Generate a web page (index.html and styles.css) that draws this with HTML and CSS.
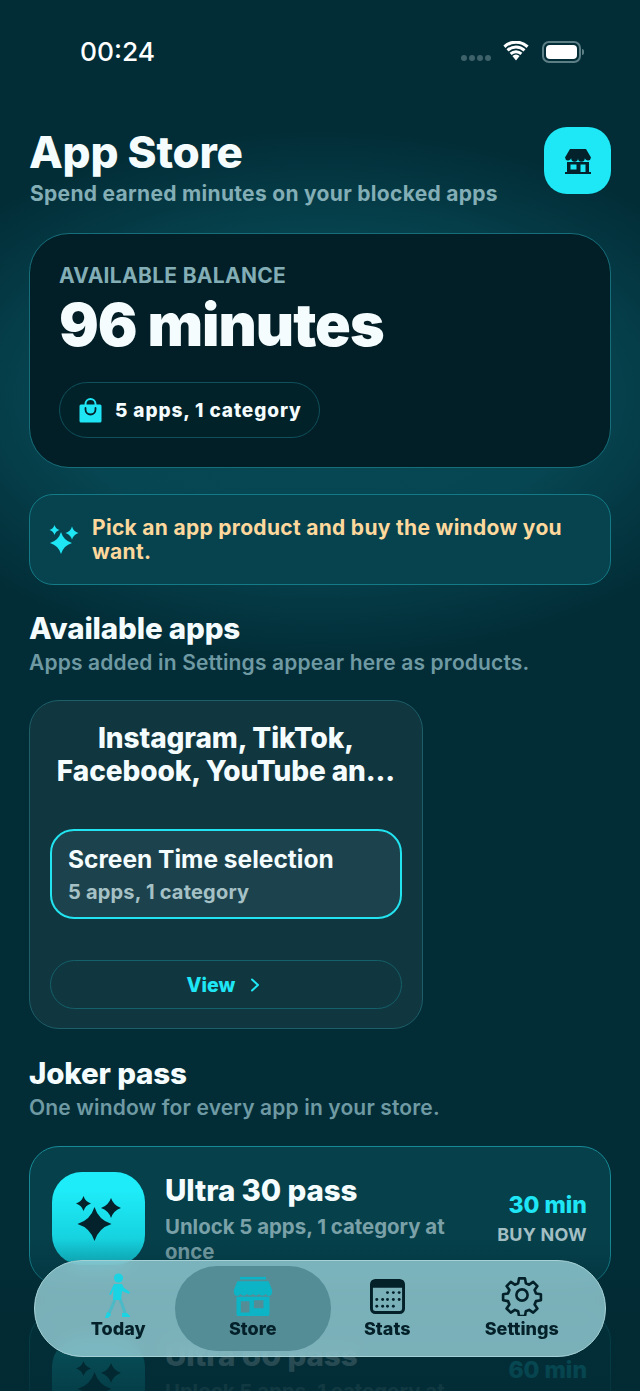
FILE: index.html
```html
<!DOCTYPE html>
<html lang="en">
<head>
<meta charset="utf-8">
<title>App Store</title>
<link rel="stylesheet" href="styles.css">
</head>
<body>
<div class="screen">
  <div class="glow"></div>
  <header class="status">
    <span class="time">00:24</span>
    <div class="status-icons">
      <div class="dots"><i></i><i></i><i></i><i></i></div>
      <svg class="wifi" width="26" height="20" viewBox="0 0 26 20"><path fill="#fff" d="M13 15l3.600 0-3.600 4.400L9.400 15a5 5 0 0 1 7.200 0zM6.600 11.800a9.200 9.200 0 0 1 12.800 0l-2 2.300a6.300 6.300 0 0 0-8.800 0zM3.500 8.200a13.800 13.800 0 0 1 19 0l-2 2.300a10.800 10.800 0 0 0-15 0zM.4 4.600a18.400 18.400 0 0 1 25.200 0l-2 2.300a15.400 15.400 0 0 0-21.200 0z"/></svg>
      <div class="battery"><div class="battery-fill"></div></div>
      <div class="battery-tip"></div>
    </div>
  </header>

  <main class="content">
    <section class="page-head">
      <div>
        <h1 class="page-title">App Store</h1>
        <p class="page-sub">Spend earned minutes on your blocked apps</p>
      </div>
      <div class="head-btn">
        <svg width="28" height="26" viewBox="0 0 28 26"><path fill="#03222b" d="M6 1h16l5 8.500a3.200 3.200 0 0 1-6.200.8 3.400 3.400 0 0 1-6.800 0 3.400 3.400 0 0 1-6.800 0A3.200 3.200 0 0 1 1 9.500z"/><path fill="#03222b" fill-rule="evenodd" d="M3 14h22v10h2v2H1v-2h2zM6.500 16.500v5h6v-5zM16.500 16.500V24h5v-7.500z"/></svg>
      </div>
    </section>

    <section class="balance">
      <div class="balance-label">AVAILABLE BALANCE</div>
      <div class="balance-value">96 minutes</div>
      <div class="pill">
        <svg width="23" height="25" viewBox="0 0 23 25"><path fill="none" stroke="#1fe6f5" stroke-width="2" d="M6.500 8V6a5 5 0 0 1 10 0v2"/><path fill="#1fe6f5" d="M2 6.500h19a1.500 1.500 0 0 1 1.500 1.500v15a1.500 1.500 0 0 1-1.500 1.500H2A1.500 1.500 0 0 1 .5 23V8A1.500 1.500 0 0 1 2 6.500z"/><path fill="none" stroke="#03222b" stroke-width="1.800" stroke-linecap="round" d="M6.500 10v1.500a5 5 0 0 0 10 0V10"/></svg>
        <span>5 apps, 1 category</span>
      </div>
    </section>

    <section class="tip">
      <svg width="30" height="30" viewBox="0 0 30 30"><path fill="#1fe6f5" d="M12 7Q14.500 15.500 23 18 14.500 20.500 12 29 9.500 20.500 1 18 9.500 15.500 12 7zM5.500 0Q6.700 3.800 10.500 5 6.700 6.200 5.500 10 4.300 6.200.5 5 4.300 3.800 5.500 0zM23 1.500Q24.500 6.500 29.500 8 24.500 9.500 23 14.500 21.500 9.500 16.500 8 21.500 6.500 23 1.500z"/></svg>
      <p>Pick an app product and buy the window you want.</p>
    </section>

    <h2 class="section-title first">Available apps</h2>
    <p class="section-sub">Apps added in Settings appear here as products.</p>

    <section class="app-card">
      <h3 class="app-title">Instagram, TikTok,<br>Facebook, YouTube an...</h3>
      <div class="selection">
        <div class="selection-title">Screen Time selection</div>
        <div class="selection-sub">5 apps, 1 category</div>
      </div>
      <div class="view-btn">
        <span>View</span>
        <svg width="10" height="14" viewBox="0 0 10 14"><path fill="none" stroke="#1fe6f5" stroke-width="2" stroke-linecap="round" stroke-linejoin="round" d="M2 1.500 8 7l-6 5.500"/></svg>
      </div>
    </section>

    <h2 class="section-title">Joker pass</h2>
    <p class="section-sub">One window for every app in your store.</p>

    <section class="pass">
      <div class="pass-icon">
        <svg width="46" height="46" viewBox="0 0 46 46"><path fill="#03222b" d="M18.500 11Q22.500 24 35.500 28 22.500 32 18.500 45 14.500 32 1.500 28 14.500 24 18.500 11zM7.500 0Q9.300 5.700 15 7.500 9.300 9.300 7.500 15 5.700 9.300 0 7.500 5.700 5.700 7.500 0zM35 2Q37.500 9.500 45 12 37.500 14.500 35 22 32.500 14.500 25 12 32.500 9.500 35 2z"/></svg>
      </div>
      <div class="pass-body">
        <div class="pass-title">Ultra 30 pass</div>
        <div class="pass-sub">Unlock 5 apps, 1 category at once</div>
      </div>
      <div class="pass-side">
        <div class="pass-price">30 min</div>
        <div class="pass-buy">BUY NOW</div>
      </div>
    </section>

    <section class="pass">
      <div class="pass-icon">
        <svg width="46" height="46" viewBox="0 0 46 46"><path fill="#03222b" d="M18.500 11Q22.500 24 35.500 28 22.500 32 18.500 45 14.500 32 1.500 28 14.500 24 18.500 11zM7.500 0Q9.300 5.700 15 7.500 9.300 9.300 7.500 15 5.700 9.300 0 7.500 5.700 5.700 7.500 0zM35 2Q37.500 9.500 45 12 37.500 14.500 35 22 32.500 14.500 25 12 32.500 9.500 35 2z"/></svg>
      </div>
      <div class="pass-body">
        <div class="pass-title">Ultra 60 pass</div>
        <div class="pass-sub">Unlock 5 apps, 1 category at once</div>
      </div>
      <div class="pass-side">
        <div class="pass-price">60 min</div>
        <div class="pass-buy">BUY NOW</div>
      </div>
    </section>
  </main>

  <div class="fade"></div>

  <nav class="tabbar">
    <div class="tab">
      <svg class="tab-icon" width="27" height="45" viewBox="0 0 27 45"><g fill="none" stroke="#1cc4d3" stroke-width="3" stroke-linecap="round" stroke-linejoin="round" opacity=".5"><path d="M10 26l-3 8-3 6M15 26l3 8 2 6"/></g><g fill="#1ad4e4"><circle cx="13.500" cy="5" r="4.500"/><path d="M9 11h8l2 4 6 4-1 2-7-3-1 9H8l.5-11-2.500 6-2-.5z"/><path d="M2 39l3 1 1 2-3 3H0zM17 40h5l3 3v1h-8z"/></g></svg>
      <span>Today</span>
    </div>
    <div class="tab active">
      <svg class="tab-icon raise-2" width="40" height="40" viewBox="0 0 46 46"><g fill="#0cb4c6"><path d="M8 1h30v3H8z"/><path d="M5 6h36l4 10v3a4 4 0 0 1-7.500 1.800 4.500 4.500 0 0 1-7.500 0 4.500 4.500 0 0 1-7 0 4.500 4.500 0 0 1-7 0 4.500 4.500 0 0 1-7.500 0A4 4 0 0 1 1 19v-3z"/><path fill-rule="evenodd" d="M4 24h38v20a2 2 0 0 1-2 2H6a2 2 0 0 1-2-2zM9 29v13h10V29zM24 28v9h11v-9z"/></g></svg>
      <span>Store</span>
    </div>
    <div class="tab">
      <svg class="tab-icon raise-4" width="37" height="35" viewBox="0 0 36 36"><rect x="1.500" y="1.500" width="33" height="33" rx="4" fill="none" stroke="#04212a" stroke-width="3"/><path fill="#04212a" d="M4 1h28a3 3 0 0 1 3 3v5H1V4a3 3 0 0 1 3-3z"/><g fill="#04212a"><circle cx="18" cy="14" r="1.500"/><circle cx="24" cy="14" r="1.500"/><circle cx="30" cy="14" r="1.500"/><circle cx="7" cy="21" r="1.500"/><circle cx="13" cy="21" r="1.500"/><circle cx="18" cy="21" r="1.500"/><circle cx="24" cy="21" r="1.500"/><circle cx="30" cy="21" r="1.500"/><circle cx="7" cy="28" r="1.500"/><circle cx="13" cy="28" r="1.500"/><circle cx="18" cy="28" r="1.500"/><circle cx="24" cy="28" r="1.500"/></g></svg>
      <span>Stats</span>
    </div>
    <div class="tab">
      <svg class="tab-icon raise-2" width="42" height="42" viewBox="0 0 24 24"><circle cx="12" cy="12" r="3.200" fill="none" stroke="#04212a" stroke-width="1.500"/><path fill="none" stroke="#04212a" stroke-width="1.500" stroke-linejoin="round" d="M10.300 2.500h3.400l.5 2.800 1.900.8 2.300-1.600 2.400 2.400-1.600 2.300.8 1.900 2.800.5v3.400l-2.800.5-.8 1.900 1.600 2.300-2.400 2.400-2.300-1.600-1.900.8-.5 2.800h-3.400l-.5-2.800-1.900-.8-2.300 1.600-2.400-2.400 1.600-2.300-.8-1.900-2.800-.5v-3.400l2.800-.5.8-1.900-1.600-2.300 2.400-2.400 2.300 1.600 1.900-.8z"/></svg>
      <span>Settings</span>
    </div>
  </nav>
</div>
</body>
</html>
```
FILE: styles.css
```css
* { box-sizing: border-box; margin: 0; padding: 0; }
html, body { height: 100%; }
body {
  background: #022e38;
  font-family: Inter, "Noto Sans", "Liberation Sans", sans-serif;
  color: #f4fcfe;
  overflow: hidden;
}
.screen {
  position: relative;
  width: 640px;
  height: 1391px;
  overflow: hidden;
  background: #022d37;
}
.glow {
  position: absolute;
  left: -140px;
  top: 130px;
  width: 920px;
  height: 530px;
  background: radial-gradient(closest-side, #064854 0%, #064652 55%, rgba(5, 62, 73, .7) 78%, rgba(2, 45, 55, 0) 100%);
}
.status {
  position: relative;
  height: 104px;
  display: flex;
  justify-content: space-between;
  align-items: center;
  padding: 0 56px 0 80px;
}
.time { font-size: 26.300px; font-weight: 500; color: #fff; margin-top: -2px; }
.status-icons { display: flex; align-items: center; }
.dots { display: flex; gap: 2px; margin: 12px 12px 0 0; }
.dots i { width: 6px; height: 6px; border-radius: 50%; background: #3e6269; }
.wifi { margin-right: 13px; margin-top: -2px; }
.battery {
  width: 39px;
  height: 22px;
  border: 2px solid #5c7f85;
  border-radius: 7px;
  padding: 2px;
}
.battery-fill { width: 100%; height: 100%; background: #fff; border-radius: 4px; }
.battery-tip { width: 2px; height: 6px; margin-left: 1px; background: #5c7f85; border-radius: 0 2px 2px 0; }
.content { position: relative; padding: 0 29px; }
.page-head {
  display: flex;
  justify-content: space-between;
  align-items: flex-start;
  height: 129px;
  padding-top: 23px;
}
.page-title { font-size: 44px; line-height: 50px; font-weight: 800; letter-spacing: -.25px; }
.page-sub { font-size: 21px; line-height: 33px; font-weight: 700; color: #83aeb6; letter-spacing: .3px; margin-left: 1px; }
.head-btn {
  width: 67px;
  height: 67px;
  border-radius: 23px;
  background: #1ee8f6;
  display: flex;
  align-items: center;
  justify-content: center;
}
.balance {
  height: 235px;
  border: 1.500px solid #166e7a;
  border-radius: 40px;
  background: #021f27;
  padding: 28px 29px 0;
}
.balance-label { font-size: 21px; line-height: 28px; font-weight: 700; color: #83aeb6; letter-spacing: .3px; }
.balance-value { font-size: 59px; line-height: 70px; font-weight: 900; letter-spacing: -1px; }
.pill {
  display: inline-flex;
  align-items: center;
  gap: 13px;
  height: 56px;
  margin-top: 22px;
  padding: 0 17px 0 19px;
  border: 1.500px solid #0f505b;
  border-radius: 28px;
  background: #02222a;
  font-size: 19px;
  font-weight: 800;
  letter-spacing: .9px;
}
.tip {
  height: 91px;
  margin-top: 26px;
  display: flex;
  align-items: center;
  gap: 13px;
  padding: 0 19px;
  border: 1.500px solid #137a86;
  border-radius: 24px;
  background: #07434f;
}
.tip svg { flex: none; }
.tip p { font-size: 21px; line-height: 24px; font-weight: 700; color: #fdd89c; letter-spacing: .3px; }
.section-title { font-size: 29.500px; line-height: 36px; font-weight: 800; margin: 26px 0 0 0; letter-spacing: -.15px; }
.section-title.first { margin-top: 25px; }
.section-sub { font-size: 21px; line-height: 28px; font-weight: 600; color: #6f9aa3; margin: 3px 0 0 0; letter-spacing: .15px; }
.app-card {
  width: 394px;
  height: 329px;
  margin-top: 23px;
  padding: 21px 20px 0;
  border: 1.500px solid #1d5e69;
  border-radius: 30px;
  background: #10363f;
}
.app-title { text-align: center; font-size: 28px; line-height: 33px; font-weight: 800; letter-spacing: -.1px; white-space: nowrap; }
.selection {
  height: 90px;
  margin-top: 41px;
  padding: 12px 16px 0;
  border: 2px solid #22e4f0;
  border-radius: 24px;
  background: #1c434d;
}
.selection-title { font-size: 24.500px; line-height: 32px; font-weight: 700; }
.selection-sub { font-size: 20px; line-height: 28px; font-weight: 700; color: #a6c1c6; margin-top: 3px; letter-spacing: .2px; }
.view-btn {
  height: 49px;
  margin-top: 41px;
  display: flex;
  align-items: center;
  justify-content: center;
  gap: 15px;
  padding-right: 5px;
  border: 1.500px solid #14606b;
  border-radius: 25px;
  color: #1fe6f5;
  font-size: 19.500px;
  font-weight: 800;
}
.pass {
  height: 139px;
  margin-top: 26px;
  display: flex;
  align-items: flex-start;
  padding: 25px 23px 0 22px;
  border: 1.500px solid #178a96;
  border-radius: 30px;
  background: #05404b;
}
.section-sub + .pass { margin-top: 24px; }
.pass-icon {
  flex: none;
  width: 93px;
  height: 93px;
  border-radius: 30px;
  background: linear-gradient(#1eecf8 20%, #12c4d2);
  display: flex;
  align-items: center;
  justify-content: center;
}
.pass-body { flex: 1; margin-left: 20px; }
.pass-title { font-size: 29.500px; line-height: 36px; font-weight: 800; letter-spacing: -.1px; }
.pass-sub { font-size: 20.400px; line-height: 25px; font-weight: 700; color: #7ba1a8; margin-top: 6px; width: 300px; }
.pass-side { text-align: right; margin-top: 18px; }
.pass-price { font-size: 23px; line-height: 30px; font-weight: 800; color: #1fe6f5; }
.pass-buy { font-size: 18px; line-height: 24px; font-weight: 700; color: #a3bfc3; margin-top: 3px; letter-spacing: .2px; white-space: nowrap; }
.fade {
  position: absolute;
  left: 0;
  right: 0;
  top: 1238px;
  bottom: 0;
  background: linear-gradient(rgba(2, 42, 51, 0), rgba(2, 42, 51, .8) 60%, rgba(2, 42, 51, .88));
}
.tabbar {
  position: absolute;
  left: 34px;
  top: 1260px;
  width: 572px;
  height: 97px;
  display: grid;
  grid-template-columns: repeat(4, 134.500px);
  align-items: center;
  padding-left: 16px;
  border: 1.500px solid #a5d0d5;
  border-radius: 48px;
  background: rgba(163, 220, 228, .75);
  backdrop-filter: blur(8px);
}
.tab {
  height: 85px;
  display: flex;
  flex-direction: column;
  align-items: center;
  justify-content: flex-end;
  padding-bottom: 11px;
  font-size: 18px;
  line-height: 22px;
  font-weight: 800;
  color: #04212a;
}
.tab.active { background: #558d97; border-radius: 42px; margin: 0 -10.750px; }
.raise-2 { margin-bottom: 2px; }
.raise-4 { margin-bottom: 4px; }
```
